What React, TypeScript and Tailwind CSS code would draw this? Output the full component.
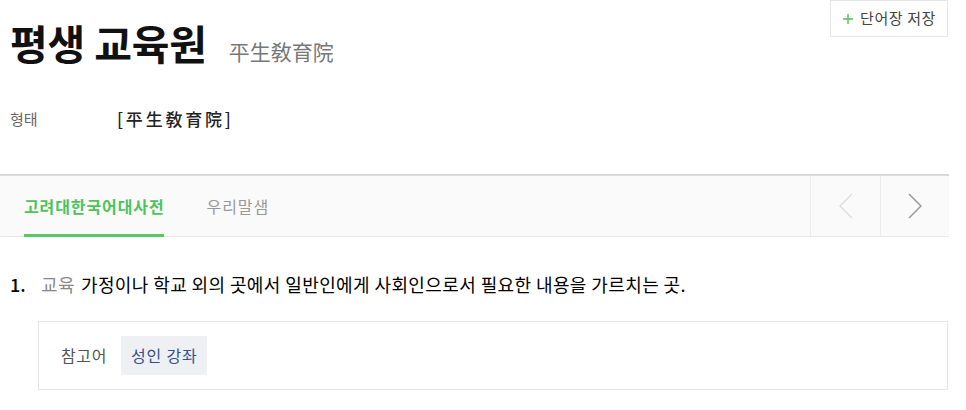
import React from "react";

const font = { fontFamily: '"Noto Sans CJK KR", "Noto Sans", sans-serif' };

function PlusIcon() {
  return (
    <svg width="12" height="12" viewBox="0 0 12 12" className="shrink-0">
      <path d="M6 1v10M1 6h10" stroke="#4cc35c" strokeWidth="1.4" fill="none" />
    </svg>
  );
}

function Chevron({ dir, color }: { dir: "left" | "right"; color: string }) {
  return (
    <svg width="14" height="26" viewBox="0 0 14 26">
      <path
        d={dir === "left" ? "M13 1L1 13l12 12" : "M1 1l12 12L1 25"}
        stroke={color}
        strokeWidth="1.5"
        fill="none"
      />
    </svg>
  );
}

export default function App() {
  return (
    <div className="min-h-screen w-full bg-white" style={font}>
      <div className="w-[949px]">
        {/* header */}
        <div className="flex items-start justify-between">
          <div className="flex items-baseline pl-[10px] pt-[14px]">
            <h1 className="text-[41px] font-bold leading-[56px] tracking-[-0.2px] text-[#111]">평생 교육원</h1>
            <span className="ml-[22px] text-[21px] text-[#777]">平生敎育院</span>
          </div>
          <button className="mr-px flex h-[37px] items-center gap-[6px] border border-[#e6e6e6] bg-white px-[11px] text-[15px] tracking-[0.6px] text-[#444]">
            <PlusIcon />
            단어장 저장
          </button>
        </div>

        <div className="mt-[36px] flex items-center pl-[10px]">
          <span className="w-[107px] text-[15px] text-[#666]">형태</span>
          <span className="text-[17px] font-medium tracking-[2.8px] text-[#222]">[平生敎育院]</span>
        </div>

        {/* tabs */}
        <div className="mt-[42px] flex h-[63px] border-t-2 border-b border-t-[#d9d9d9] border-b-[#e8e8e8] bg-[#fafafa]">
          <div className="flex flex-1 pl-[24px]">
            <div className="relative flex items-center text-[16px] font-bold tracking-[0.9px] text-[#4cc35c]">
              고려대한국어대사전
              <span className="absolute bottom-[-1px] left-0 right-[1px] h-[3px] bg-[#56c866]" />
            </div>
            <div className="ml-[42px] flex items-center text-[16px] tracking-[0.9px] text-[#999]">우리말샘</div>
          </div>
          <div className="flex w-[70px] items-center justify-center border-l border-[#ececec]">
            <Chevron dir="left" color="#dedede" />
          </div>
          <div className="flex w-[69px] items-center justify-center border-l border-[#ececec]">
            <Chevron dir="right" color="#999" />
          </div>
        </div>

        {/* definition */}
        <div className="mt-[34px] flex items-center pl-[10px] text-[18px] text-[#000]">
          <span className="w-[31px] font-medium">1.</span>
          <span className="mr-[6px] tracking-[0.4px] text-[#888]">교육</span>
          <span className="tracking-[0.4px]">가정이나 학교 외의 곳에서 일반인에게 사회인으로서 필요한 내용을 가르치는 곳.</span>
        </div>

        <div className="ml-[38px] mr-px mt-[23px] flex h-[69px] items-center border border-[#e6e6e6] pl-[22px]">
          <span className="text-[16px] tracking-[0.6px] text-[#555]">참고어</span>
          <span className="ml-[14px] flex h-[39px] items-center bg-[#eef0f4] px-[10px] text-[16px] tracking-[0.8px] text-[#34518a]">
            성인 강좌
          </span>
        </div>
      </div>
    </div>
  );
}
